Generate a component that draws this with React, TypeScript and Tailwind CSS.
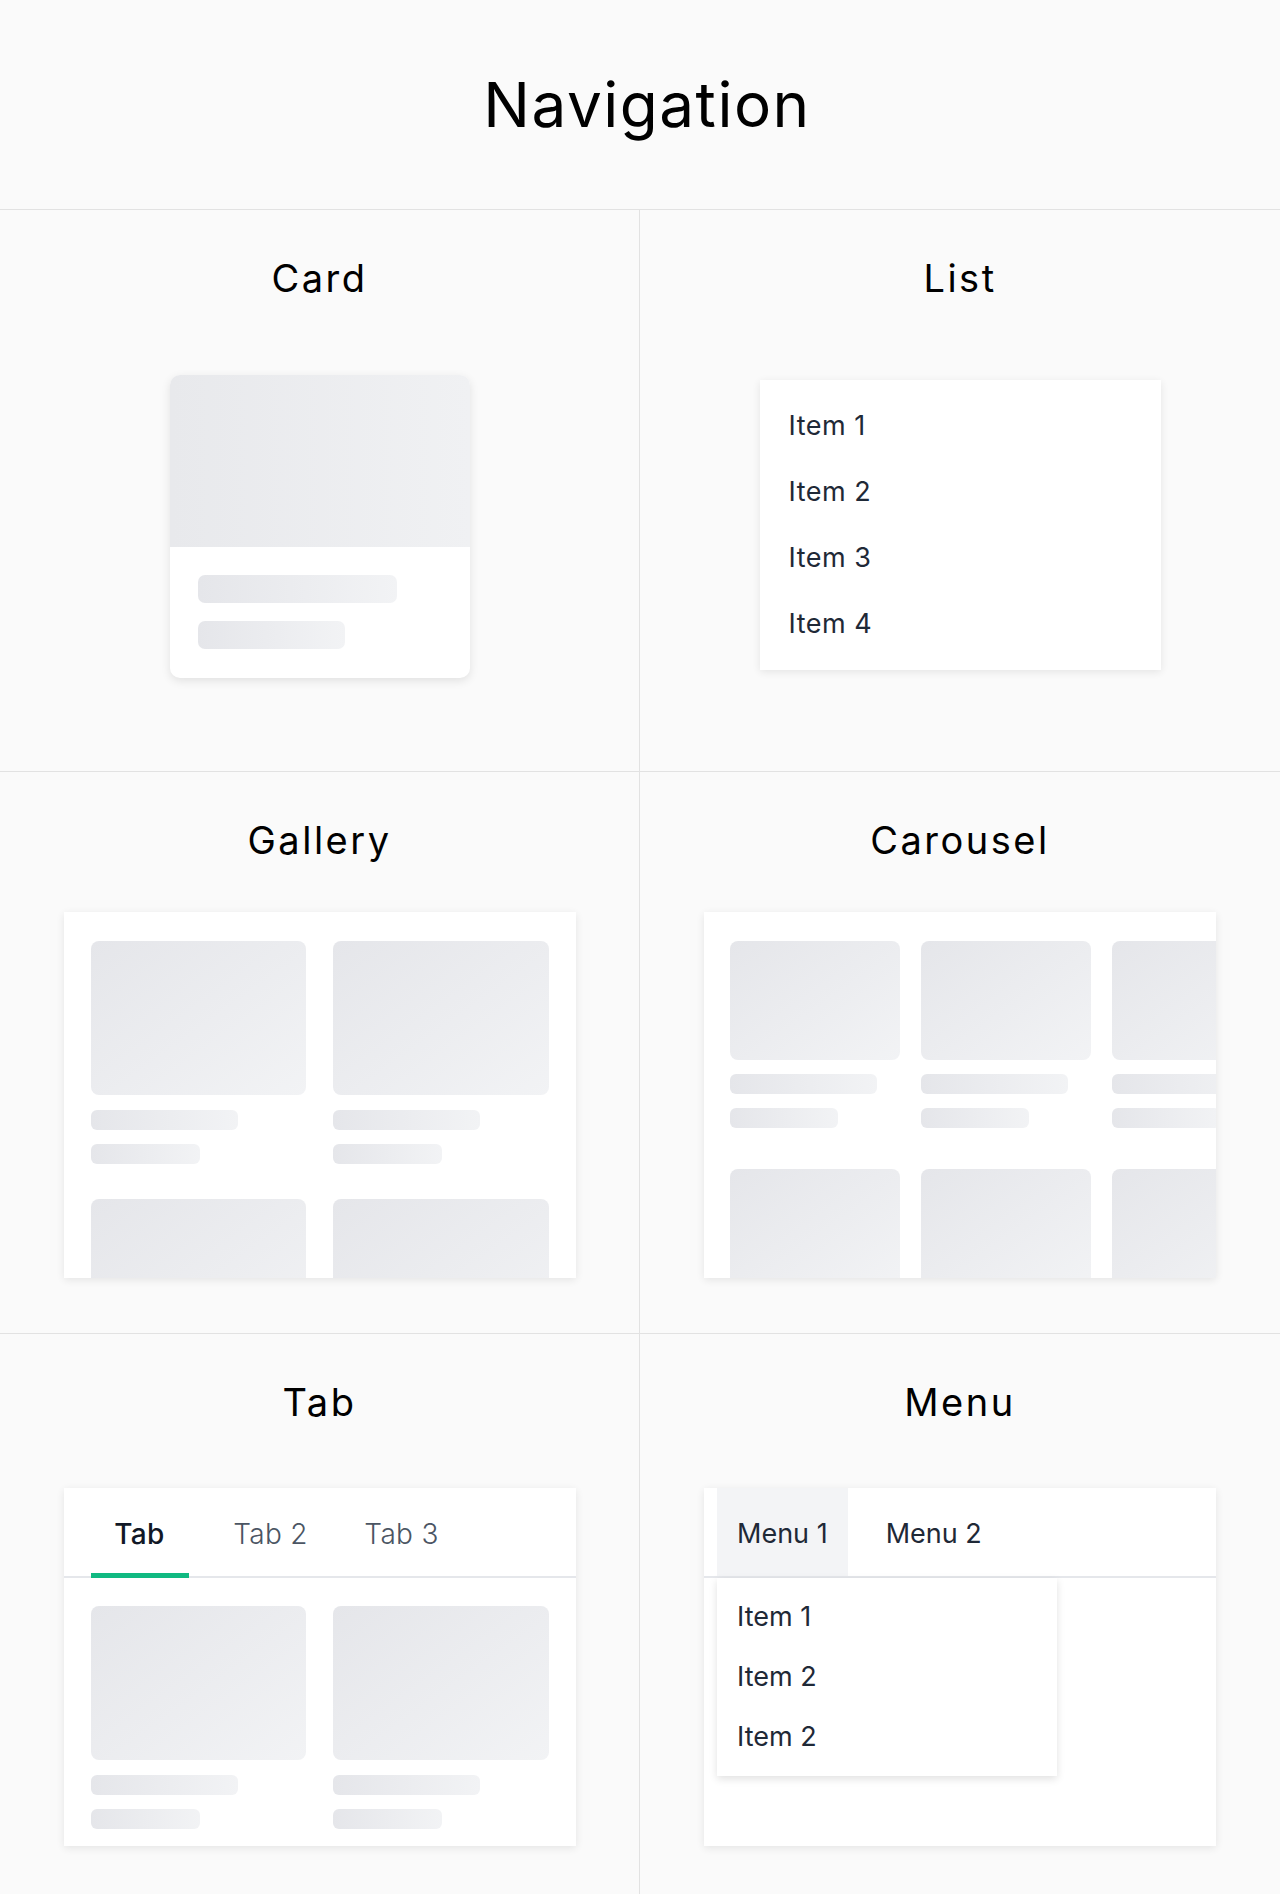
import type { ReactNode } from 'react';
import clsx from 'clsx';

const font = "font-['Inter',sans-serif]";

// skeleton fills
const tile = 'rounded-[8px] bg-linear-to-br from-[#e5e6ea] to-[#f2f3f5]';
const bar = 'rounded-[6px] bg-linear-to-r from-[#e5e6ea] to-[#f2f3f5]';
const panel = 'bg-white shadow-[0_2px_8px_rgba(0,0,0,0.09)]';

function Cell({ title, left, last, children }: { title: string; left?: boolean; last?: boolean; children: ReactNode }) {
  return (
    <section
      className={clsx(
        'flex h-[562px] flex-col items-center border-[#e2e2e2]',
        left && 'border-r',
        !last && 'border-b',
      )}
    >
      <h2 className="mt-[46px] text-[38px] leading-[44px] tracking-[2.5px] text-black">{title}</h2>
      {children}
    </section>
  );
}

function GalleryItem() {
  return (
    <div className="flex flex-col">
      <div className={clsx(tile, 'h-[154px]')} />
      <div className={clsx(bar, 'mt-[15px] h-[20px] w-[147px]')} />
      <div className={clsx(bar, 'mt-[14px] h-[20px] w-[109px]')} />
    </div>
  );
}

function CarouselItem() {
  return (
    <div className="flex w-[170px] shrink-0 flex-col">
      <div className={clsx(tile, 'h-[119px]')} />
      <div className={clsx(bar, 'mt-[14px] h-[20px] w-[147px]')} />
      <div className={clsx(bar, 'mt-[14px] h-[20px] w-[108px]')} />
    </div>
  );
}

export default function App() {
  return (
    <div className={clsx(font, 'min-h-screen w-[1280px] bg-[#fafafa]')}>
      <header className="flex h-[210px] items-center justify-center border-b border-[#e2e2e2] pl-[14px]">
        <h1 className="text-[62px] leading-none tracking-[1.5px] text-black">Navigation</h1>
      </header>

      <div className="grid grid-cols-2">
        {/* Card */}
        <Cell title="Card" left>
          <div className="mt-[75px] w-[300px] overflow-hidden rounded-[10px] bg-white shadow-[0_3px_10px_rgba(0,0,0,0.1)]">
            <div className="h-[172px] bg-linear-to-r from-[#e8e9ec] to-[#f0f1f3]" />
            <div className="flex flex-col gap-[18px] px-[28px] pt-[28px] pb-[29px]">
              <div className={clsx(bar, 'h-[28px] w-[199px] rounded-[7px]')} />
              <div className={clsx(bar, 'h-[28px] w-[147px] rounded-[7px]')} />
            </div>
          </div>
        </Cell>

        {/* List */}
        <Cell title="List">
          <ul className={clsx(panel, 'mt-[80px] w-[401px] py-[13px]')}>
            {['Item 1', 'Item 2', 'Item 3', 'Item 4'].map((item) => (
              <li key={item} className="flex h-[66px] items-center px-[29px] text-[27px] tracking-[0.5px] text-[#1f2937]">
                {item}
              </li>
            ))}
          </ul>
        </Cell>

        {/* Gallery */}
        <Cell title="Gallery" left>
          <div className={clsx(panel, 'mt-[50px] h-[366px] w-[512px] overflow-hidden px-[27px] pt-[29px]')}>
            <div className="grid grid-cols-2 gap-x-[27px] gap-y-[35px]">
              <GalleryItem />
              <GalleryItem />
              <GalleryItem />
              <GalleryItem />
            </div>
          </div>
        </Cell>

        {/* Carousel */}
        <Cell title="Carousel">
          <div className={clsx(panel, 'mt-[50px] h-[366px] w-[512px] overflow-hidden pt-[29px] pl-[26px]')}>
            <div className="flex gap-[21px]">
              <CarouselItem />
              <CarouselItem />
              <CarouselItem />
            </div>
            <div className="mt-[41px] flex gap-[21px]">
              <CarouselItem />
              <CarouselItem />
              <CarouselItem />
            </div>
          </div>
        </Cell>

        {/* Tab */}
        <Cell title="Tab" left last>
          <div className={clsx(panel, 'mt-[64px] h-[358px] w-[512px]')}>
            <div className="flex h-[90px] gap-[33px] border-b-2 border-[#e5e7eb] pl-[27px]">
              {['Tab', 'Tab 2', 'Tab 3'].map((t, i) => (
                <div
                  key={t}
                  className={clsx(
                    'relative flex w-[98px] items-center justify-center pt-[4px] text-[28px] tracking-[0.3px]',
                    i === 0 ? 'font-medium text-[#111827]' : 'font-light text-[#4b5563]',
                  )}
                >
                  {t}
                  {i === 0 && <span className="absolute -bottom-[2px] left-0 h-[5px] w-full bg-[#10b981]" />}
                </div>
              ))}
            </div>
            <div className="grid grid-cols-2 gap-x-[27px] px-[27px] pt-[28px]">
              <GalleryItem />
              <GalleryItem />
            </div>
          </div>
        </Cell>

        {/* Menu */}
        <Cell title="Menu" last>
          <div className={clsx(panel, 'relative mt-[64px] h-[358px] w-[512px]')}>
            <nav className="flex h-[90px] gap-[18px] border-b-2 border-[#e5e7eb] pl-[13px] text-[27px] text-[#1f2937]">
              <div className="flex items-center bg-[#f3f4f6] px-[20px] pt-[4px]">Menu 1</div>
              <div className="flex items-center px-[20px] pt-[4px]">Menu 2</div>
            </nav>
            <ul className="absolute top-[90px] left-[13px] w-[340px] bg-white py-[9px] shadow-[0_3px_8px_rgba(0,0,0,0.12)]">
              {['Item 1', 'Item 2', 'Item 2'].map((item, i) => (
                <li key={i} className="flex h-[60px] items-center px-[20px] text-[27px] text-[#1f2937]">
                  {item}
                </li>
              ))}
            </ul>
          </div>
        </Cell>
      </div>
    </div>
  );
}
